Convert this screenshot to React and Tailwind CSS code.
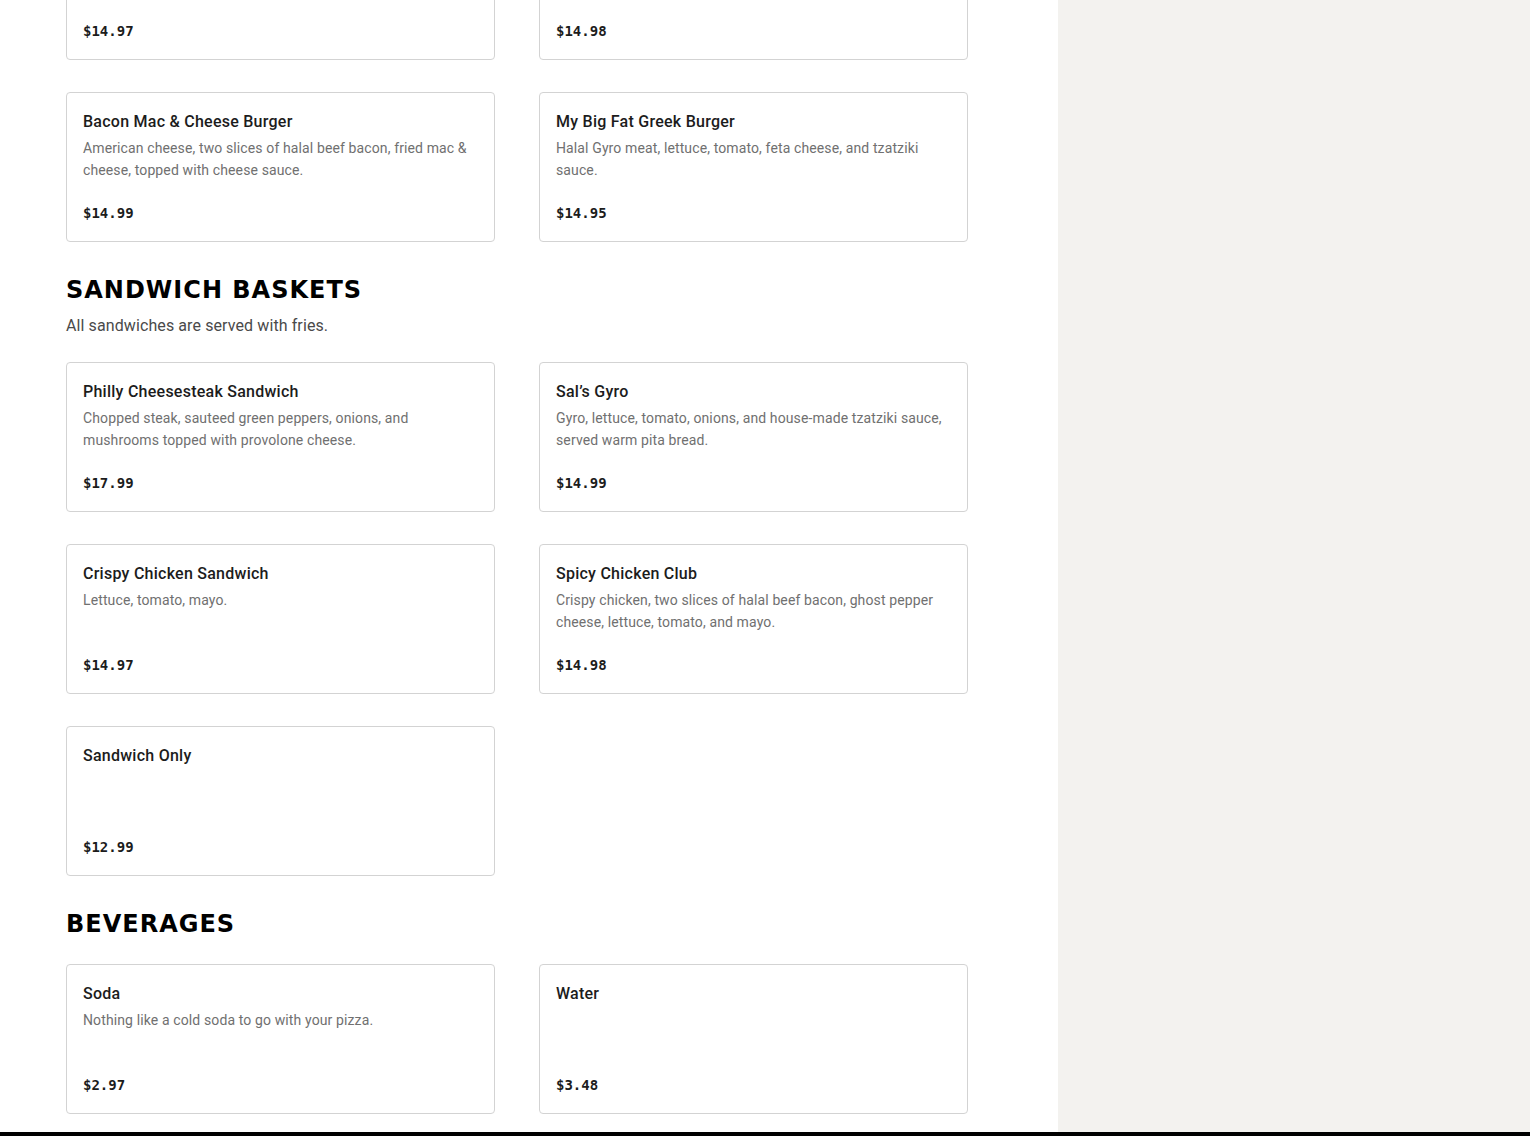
const burgers = [
  { name: "Crispy Chicken Burger", desc: "Lettuce, tomato, pickles, mayo.", price: "$14.97" },
  { name: "Spicy Chicken Burger", desc: "Ghost pepper cheese, lettuce, tomato, and spicy mayo.", price: "$14.98" },
  {
    name: "Bacon Mac & Cheese Burger",
    desc: "American cheese, two slices of halal beef bacon, fried mac & cheese, topped with cheese sauce.",
    price: "$14.99",
  },
  {
    name: "My Big Fat Greek Burger",
    desc: "Halal Gyro meat, lettuce, tomato, feta cheese, and tzatziki sauce.",
    price: "$14.95",
  },
];

const sandwiches = [
  {
    name: "Philly Cheesesteak Sandwich",
    desc: "Chopped steak, sauteed green peppers, onions, and mushrooms topped with provolone cheese.",
    price: "$17.99",
  },
  {
    name: "Sal\u2019s Gyro",
    desc: "Gyro, lettuce, tomato, onions, and house-made tzatziki sauce, served warm pita bread.",
    price: "$14.99",
  },
  { name: "Crispy Chicken Sandwich", desc: "Lettuce, tomato, mayo.", price: "$14.97" },
  {
    name: "Spicy Chicken Club",
    desc: "Crispy chicken, two slices of halal beef bacon, ghost pepper cheese, lettuce, tomato, and mayo.",
    price: "$14.98",
  },
  { name: "Sandwich Only", desc: "", price: "$12.99" },
];

const beverages = [
  { name: "Soda", desc: "Nothing like a cold soda to go with your pizza.", price: "$2.97" },
  { name: "Water", desc: "", price: "$3.48" },
];

function ItemCard({ item }) {
  return (
    <div className="flex h-[150px] flex-col rounded-[4px] border border-[#d3d3d3] bg-white px-4 pt-[17px] pb-[18px]">
      <h3 className="font-['Roboto',sans-serif] text-[16px] font-medium leading-6 tracking-[0.25px] text-[#1c1c1c]">
        {item.name}
      </h3>
      {item.desc && (
        <p className="mt-[3px] font-['Roboto',sans-serif] text-[14px] leading-[22px] tracking-[0.12px] text-[#707070]">
          {item.desc}
        </p>
      )}
      <div className="mt-auto font-['DejaVu_Sans_Mono',monospace] text-[14px] font-bold leading-5 text-[#1c1c1c]">
        {item.price}
      </div>
    </div>
  );
}

function Section({ title, note, items }) {
  return (
    <section className="mt-8">
      <h2 className="font-['DejaVu_Sans',sans-serif] text-[24px] font-bold leading-8 tracking-[1px] text-black">
        {title}
      </h2>
      {note && (
        <p className="mt-2 font-['Roboto',sans-serif] text-[16px] leading-6 tracking-[0.1px] text-[#4a4a4a]">
          {note}
        </p>
      )}
      <div className="mt-6 grid grid-cols-[429px_429px] gap-x-[44px] gap-y-8">
        {items.map((item) => (
          <ItemCard key={item.name} item={item} />
        ))}
      </div>
    </section>
  );
}

export default function App() {
  return (
    <div className="h-[1136px] overflow-hidden bg-white">
      <div className="flex">
        <main className="w-[1058px] shrink-0 px-[66px] pb-[18px]">
          <div className="mt-[-90px] grid grid-cols-[429px_429px] gap-x-[44px] gap-y-8">
            {burgers.map((item) => (
              <ItemCard key={item.name} item={item} />
            ))}
          </div>
          <Section title="SANDWICH BASKETS" note="All sandwiches are served with fries." items={sandwiches} />
          <Section title="BEVERAGES" items={beverages} />
        </main>
        <aside className="flex-1 bg-[#f3f2ef]" />
      </div>
      <footer className="h-[300px] bg-black" />
    </div>
  );
}
